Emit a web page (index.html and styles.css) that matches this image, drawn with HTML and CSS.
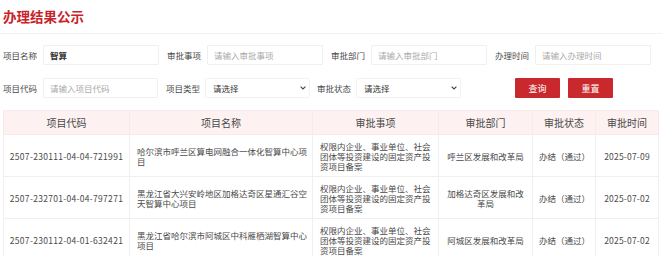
FILE: index.html
```html
<!DOCTYPE html>
<html lang="zh-CN">
<head>
    <meta charset="UTF-8">
    <meta name="viewport" content="width=device-width, initial-scale=1.0">
    <title>办理结果公示</title>
    <link rel="stylesheet" href="styles.css">
</head>
<body>
    <div class="page">
        <div class="page-head">
            <h1 class="title">办理结果公示</h1>
        </div>

        <!-- 查询条件 -->
        <form class="search">
            <div class="search-row">
                <label class="field">
                    <span class="field-label">项目名称</span>
                    <input class="field-input filled" type="text" value="智算">
                </label>
                <label class="field">
                    <span class="field-label">审批事项</span>
                    <input class="field-input" type="text" placeholder="请输入审批事项">
                </label>
                <label class="field">
                    <span class="field-label">审批部门</span>
                    <input class="field-input" type="text" placeholder="请输入审批部门">
                </label>
                <label class="field">
                    <span class="field-label">办理时间</span>
                    <input class="field-input" type="text" placeholder="请输入办理时间">
                </label>
            </div>
            <div class="search-row">
                <label class="field">
                    <span class="field-label">项目代码</span>
                    <input class="field-input short" type="text" placeholder="请输入项目代码">
                </label>
                <label class="field field-select">
                    <span class="field-label">项目类型</span>
                    <span class="select-box">
                        <select class="select">
                            <option>请选择</option>
                        </select>
                        <svg class="chevron" width="6" height="4" viewBox="0 0 6 4"><path d="M0.6 0.6 L3 3 L5.4 0.6" fill="none" stroke="#444" stroke-width="1.1"/></svg>
                    </span>
                </label>
                <label class="field field-select">
                    <span class="field-label">审批状态</span>
                    <span class="select-box">
                        <select class="select">
                            <option>请选择</option>
                        </select>
                        <svg class="chevron" width="6" height="4" viewBox="0 0 6 4"><path d="M0.6 0.6 L3 3 L5.4 0.6" fill="none" stroke="#444" stroke-width="1.1"/></svg>
                    </span>
                </label>
                <div class="actions">
                    <button class="btn" type="button">查询</button>
                    <button class="btn" type="button">重置</button>
                </div>
            </div>
        </form>

        <table class="result-table">
            <colgroup>
                <col style="width: 126px">
                <col style="width: 183px">
                <col style="width: 126px">
                <col style="width: 94px">
                <col style="width: 63px">
                <col style="width: 63px">
            </colgroup>
            <thead>
                <tr>
                    <th>项目代码</th>
                    <th>项目名称</th>
                    <th>审批事项</th>
                    <th>审批部门</th>
                    <th>审批状态</th>
                    <th>审批时间</th>
                </tr>
            </thead>
            <tbody>
                <tr>
                    <td class="num code">2507-230111-04-04-721991</td>
                    <td class="left">哈尔滨市呼兰区算电网融合一体化智算中心项目</td>
                    <td class="left">权限内企业、事业单位、社会团体等投资建设的固定资产投资项目备案</td>
                    <td>呼兰区发展和改革局</td>
                    <td>办结（通过）</td>
                    <td class="num">2025-07-09</td>
                </tr>
                <tr>
                    <td class="num code">2507-232701-04-04-797271</td>
                    <td class="left">黑龙江省大兴安岭地区加格达奇区星通汇谷空天智算中心项目</td>
                    <td class="left">权限内企业、事业单位、社会团体等投资建设的固定资产投资项目备案</td>
                    <td>加格达奇区发展和改革局</td>
                    <td>办结（通过）</td>
                    <td class="num">2025-07-02</td>
                </tr>
                <tr>
                    <td class="num code">2507-230112-04-01-632421</td>
                    <td class="left">黑龙江省哈尔滨市阿城区中科雁栖湖智算中心项目</td>
                    <td class="left">权限内企业、事业单位、社会团体等投资建设的固定资产投资项目备案</td>
                    <td>阿城区发展和改革局</td>
                    <td>办结（通过）</td>
                    <td class="num">2025-07-02</td>
                </tr>
            </tbody>
        </table>
    </div>
</body>
</html>
```

FILE: styles.css
```css
body {
    margin: 0;
    padding: 0;
    background: #ffffff;
    color: #4a4a4a;
    font-family: "Noto Sans CJK SC", "Noto Sans", sans-serif;
    font-size: 8.5px;
}
.page {
    padding: 0 3px;
}
.page-head {
    padding: 6px 0 7px 3px;
    border-bottom: 1px solid #f1f1f1;
    margin: 0 -3px;
}
.title {
    margin: 0;
    font-size: 13.5px;
    line-height: 20px;
    font-weight: bold;
    color: #c8242b;
}
.search {
    margin-top: 11px;
}
.search-row {
    display: flex;
    align-items: center;
    gap: 8px;
    height: 20px;
}
.search-row + .search-row {
    margin-top: 13px;
}
.field {
    display: flex;
    align-items: center;
    gap: 6px;
}
.field-label {
    width: 34px;
    white-space: nowrap;
    color: #4a4a4a;
}
.field-input {
    box-sizing: border-box;
    width: 116px;
    height: 20px;
    padding: 0 6px;
    border: 1px solid #f0f0f0;
    border-radius: 1px;
    background: #fff;
    font-family: inherit;
    font-size: 8.5px;
    color: #333;
    outline: none;
}
.field-input.short {
    width: 115px;
}
.field-input::placeholder {
    color: #aaa;
}
.field-input.filled {
    font-weight: bold;
    color: #333;
}
.field-select {
    gap: 5px;
}
.field-select + .field-select {
    margin-left: -1px;
}
.select-box {
    position: relative;
    display: block;
    width: 105px;
    height: 20px;
}
.select {
    box-sizing: border-box;
    width: 100%;
    height: 20px;
    padding: 0 7px;
    border: 1px solid #f3f3f3;
    border-radius: 1px;
    background: #fff;
    font-family: inherit;
    font-size: 8.5px;
    color: #333;
    appearance: none;
    -webkit-appearance: none;
    outline: none;
}
.chevron {
    position: absolute;
    right: 4px;
    top: 8px;
}
.actions {
    display: flex;
    gap: 8px;
    margin-left: 46px;
}
.btn {
    width: 45px;
    height: 20px;
    border: none;
    border-radius: 1px;
    background: #c9282d;
    color: #fff;
    font-family: inherit;
    font-size: 9px;
    cursor: pointer;
    padding: 0;
}
.result-table {
    margin-top: 12px;
    width: 655px;
    border-collapse: collapse;
    table-layout: fixed;
}
.result-table th {
    height: 23px;
    padding: 0;
    background: #fdf1f1;
    border: 1px solid #f8eaea;
    font-weight: normal;
    font-size: 10px;
    color: #4a4a4a;
}
.result-table td {
    height: 41px;
    padding: 0 6px;
    border: 1px solid #efefef;
    text-align: center;
    line-height: 10px;
    color: #4a4a4a;
}
.result-table td.left {
    text-align: left;
    padding: 0 4px 0 7px;
}
.result-table td.num {
    letter-spacing: 0.2px;
}
.result-table td.code {
    padding: 0;
    letter-spacing: 0.3px;
}
```
